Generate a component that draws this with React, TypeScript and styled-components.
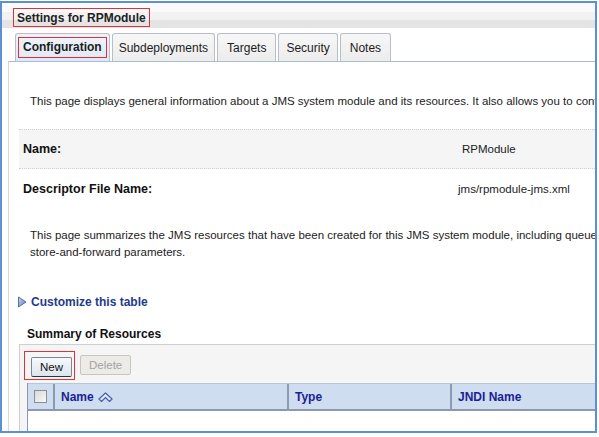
import styled, { createGlobalStyle } from "styled-components";

const GlobalStyle = createGlobalStyle`
	html, body {
		margin: 0;
		padding: 0;
		background: #ffffff;
	}
	body {
		font-family: "Liberation Sans", Tahoma, Arial, sans-serif;
		font-size: 11px;
		color: #1a1a1a;
	}
`;

const Frame = styled.div`
	box-sizing: border-box;
	width: 597px;
	height: 432px;
	margin-top: 1px;
	border: 2px solid #5d8fd5;
	overflow: hidden;
	display: flex;
	flex-direction: column;
`;

const TitleBar = styled.div`
	height: 25px;
	flex-shrink: 0;
	display: flex;
	align-items: flex-end;
	padding-left: 11px;
	background: linear-gradient(
		#fafafa 0,
		#fafafa 9px,
		#f2f2f2 9px,
		#f2f2f2 17px,
		#e4e4e4 17px,
		#e4e4e4 100%
	);
`;

const Title = styled.h1`
	margin: 0 0 1px 0;
	padding: 0 3px;
	height: 19px;
	line-height: 19px;
	font-size: 12px;
	font-weight: bold;
	color: #222;
	border: 1px solid #e0303a;
	box-sizing: border-box;
`;

const Body = styled.div`
	flex: 1;
	display: flex;
	flex-direction: column;
	padding-left: 6px;
`;

const TabRow = styled.div`
	display: flex;
	gap: 2px;
	padding: 5px 0 0 7px;
	height: 28px;
	flex-shrink: 0;
`;

const Tab = styled.div<{ $active?: boolean; $pad?: number }>`
	box-sizing: border-box;
	height: 28px;
	padding: ${(p) => (p.$active ? "2px" : `0 ${p.$pad ?? 6}px`)};
	border: 1px solid #b9bec6;
	border-bottom: none;
	border-radius: 3px 3px 0 0;
	background: ${(p) =>
		p.$active
			? "linear-gradient(#eef4fb, #dfe9f5)"
			: "linear-gradient(#f7f7f7, #ececec)"};
	display: flex;
	align-items: center;
	font-size: 12px;
	font-weight: ${(p) => (p.$active ? "bold" : "normal")};
	color: #1c1c1c;
`;

const ActiveLabel = styled.span`
	box-sizing: border-box;
	height: 21px;
	line-height: 19px;
	padding: 0 4px;
	border: 1px solid #e0303a;
`;

const Panel = styled.div`
	flex: 1;
	border-top: 1px solid #a8bcd6;
	border-left: 1px solid #d8d8d8;
	padding-top: 31px;
	white-space: nowrap;
`;

const Para = styled.p`
	margin: 0;
	padding-left: 21px;
	font-size: 11.5px;
	line-height: 17px;
	color: #222;
`;

const InfoTable = styled.div`
	margin: 19px 0 0 10px;
	display: flex;
	flex-direction: column;
`;

const InfoRow = styled.div<{ $shaded?: boolean }>`
	box-sizing: border-box;
	display: grid;
	grid-template-columns: 439px 1fr;
	align-items: center;
	height: 40px;
	padding-left: 4px;
	background: ${(p) => (p.$shaded ? "#f5f5f5" : "transparent")};
	border-top: 1px dotted ${(p) => (p.$shaded ? "#cfcfcf" : "transparent")};
	border-bottom: 1px dotted ${(p) => (p.$shaded ? "#cfcfcf" : "transparent")};
`;

const Label = styled.span`
	font-weight: bold;
	font-size: 12.5px;
	color: #111;
`;

const Value = styled.span<{ $shift?: number }>`
	font-size: 11.5px;
	color: #222;
	margin-left: ${(p) => p.$shift ?? 0}px;
`;

const Summary = styled(Para)`
	margin-top: 18px;
`;

const CustomizeLink = styled.a`
	display: flex;
	align-items: center;
	gap: 4px;
	margin: 33px 0 0 8px;
	font-size: 12px;
	font-weight: bold;
	color: #1f3b8a;
	text-decoration: none;
	line-height: 16px;
`;

const SectionTitle = styled.h2`
	margin: 16px 0 0 18px;
	font-size: 12px;
	line-height: 16px;
	font-weight: bold;
	color: #111;
`;

const ResourceBox = styled.div`
	margin: 2px 0 0 10px;
	border-top: 1px solid #cfcfcf;
	border-left: 1px solid #cfcfcf;
	background: #f5f5f5;
	padding: 5px 0 0 4px;
	height: 200px;
`;

const Toolbar = styled.div`
	display: flex;
	align-items: center;
	gap: 5px;
	height: 30px;
`;

const Highlight = styled.div`
	box-sizing: border-box;
	border: 1px solid #e0303a;
	padding: 5px 2px 2px 6px;
	display: flex;
`;

const Button = styled.button<{ $disabled?: boolean; $pad: number }>`
	box-sizing: border-box;
	height: 20px;
	padding: 0 ${(p) => p.$pad}px;
	font-family: "Liberation Sans", Tahoma, Arial, sans-serif;
	font-size: 11.5px;
	line-height: 16px;
	color: ${(p) => (p.$disabled ? "#a3a3a3" : "#111")};
	border: 1px solid ${(p) => (p.$disabled ? "#c8c6be" : "#7d8794")};
	border-bottom-color: ${(p) => (p.$disabled ? "#c8c6be" : "#2c3440")};
	border-radius: 2px;
	background: ${(p) =>
		p.$disabled ? "#ecebe6" : "linear-gradient(#f6f9fc, #dbe4ee)"};
`;

const Grid = styled.div`
	margin-top: 3px;
	margin-left: 3px;
	border-left: 1px solid #8b9ab1;
	background: #ffffff;
	height: 160px;
`;

const HeaderRow = styled.div`
	display: grid;
	grid-template-columns: 27px 234px 163px 1fr;
	height: 28px;
	background: #cfddf0;
	border-top: 1px solid #b9c6d8;
	border-bottom: 2px solid #8b9ab1;
	box-sizing: border-box;
`;

const HeaderCell = styled.div`
	display: flex;
	align-items: center;
	gap: 4px;
	padding-left: 6px;
	border-right: 2px solid #8b9ab1;
	font-size: 12px;
	font-weight: bold;
	color: #1b1f96;
	&:last-child {
		border-right: none;
	}
`;

const CheckCell = styled(HeaderCell)`
	justify-content: center;
	padding-left: 0;
`;

const CheckBox = styled.span`
	width: 11px;
	height: 11px;
	border: 1px solid #8e8e8e;
	background: linear-gradient(135deg, #d9d9d9, #f8f8f8);
`;

function SortIcon() {
	return (
		<svg width="15" height="10" viewBox="0 0 15 10">
			<polygon
				points="1,7 7.5,1 14,7 11.5,9.5 7.5,5.5 3.5,9.5"
				fill="#e6edf8"
				stroke="#4a63b5"
				strokeWidth="1.3"
				strokeLinejoin="round"
			/>
		</svg>
	);
}

function ExpandIcon() {
	return (
		<svg width="10" height="12" viewBox="0 0 10 12">
			<defs>
				<linearGradient id="tri" x1="0" y1="0" x2="1" y2="1">
					<stop offset="0" stopColor="#c8d8ee" />
					<stop offset="1" stopColor="#5d7fb6" />
				</linearGradient>
			</defs>
			<polygon
				points="1.5,1 9,6 1.5,11"
				fill="url(#tri)"
				stroke="#5572a8"
				strokeWidth="1"
				strokeLinejoin="round"
			/>
		</svg>
	);
}

const tabs = [
	{ label: "Subdeployments", pad: 6 },
	{ label: "Targets", pad: 9 },
	{ label: "Security", pad: 7 },
	{ label: "Notes", pad: 9 },
];

export default function App() {
	return (
		<>
			<GlobalStyle />
			<Frame>
				<TitleBar>
					<Title>Settings for RPModule</Title>
				</TitleBar>
				<Body>
					<TabRow>
						<Tab $active>
							<ActiveLabel>Configuration</ActiveLabel>
						</Tab>
						{tabs.map((t) => (
							<Tab key={t.label} $pad={t.pad}>
								{t.label}
							</Tab>
						))}
					</TabRow>
					<Panel>
						<Para>
							This page displays general information about a JMS system module
							and its resources. It also allows you to configure new resources
							and access existing resources.
						</Para>
						<InfoTable>
							<InfoRow $shaded>
								<Label>Name:</Label>
								<Value>RPModule</Value>
							</InfoRow>
							<InfoRow>
								<Label>Descriptor File Name:</Label>
								<Value $shift={-4}>jms/rpmodule-jms.xml</Value>
							</InfoRow>
						</InfoTable>
						<Summary>
							This page summarizes the JMS resources that have been created for
							this JMS system module, including queue and topic destinations,
							<br />
							store-and-forward parameters.
						</Summary>
						<CustomizeLink href="#">
							<ExpandIcon />
							Customize this table
						</CustomizeLink>
						<SectionTitle>Summary of Resources</SectionTitle>
						<ResourceBox>
							<Toolbar>
								<Highlight>
									<Button $pad={8}>New</Button>
								</Highlight>
								<Button $pad={8} $disabled disabled>
									Delete
								</Button>
							</Toolbar>
							<Grid>
								<HeaderRow>
									<CheckCell>
										<CheckBox />
									</CheckCell>
									<HeaderCell>
										Name <SortIcon />
									</HeaderCell>
									<HeaderCell>Type</HeaderCell>
									<HeaderCell>JNDI Name</HeaderCell>
								</HeaderRow>
							</Grid>
						</ResourceBox>
					</Panel>
				</Body>
			</Frame>
		</>
	);
}
